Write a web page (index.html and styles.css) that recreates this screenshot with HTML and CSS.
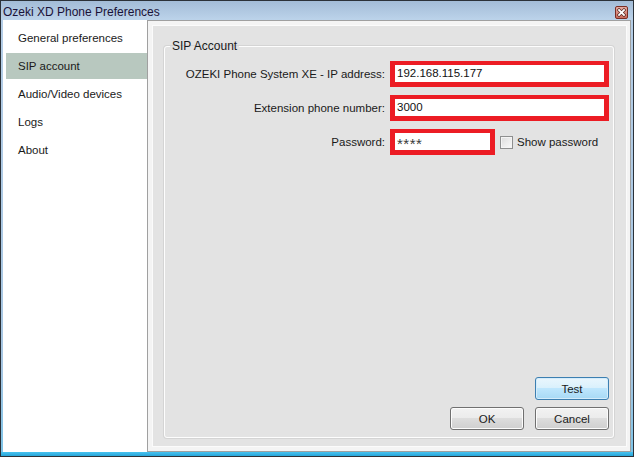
FILE: index.html
```html
<!DOCTYPE html>
<html>
<head>
<meta charset="utf-8">
<title>Ozeki XD Phone Preferences</title>
<link rel="stylesheet" href="styles.css">
</head>
<body>
<div class="window">
  <div class="titlebar">
    <span class="title">Ozeki XD Phone Preferences</span>
    <span class="close">
      <svg width="13" height="13" viewBox="0 0 13 13">
        <defs>
          <linearGradient id="cg" x1="0" y1="0" x2="0" y2="1">
            <stop offset="0" stop-color="#e9b0a6"/>
            <stop offset="1" stop-color="#c9685a"/>
          </linearGradient>
        </defs>
        <rect x="0.5" y="0.5" width="12" height="12" rx="1.5" fill="url(#cg)" stroke="#7a2e24"/>
        <path d="M4 4 L9 9 M9 4 L4 9" stroke="#5a2a24" stroke-width="3.2" stroke-linecap="square"/>
        <path d="M4 4 L9 9 M9 4 L4 9" stroke="#ffffff" stroke-width="1.8" stroke-linecap="square"/>
      </svg>
    </span>
  </div>
  <div class="frame">
    <ul class="nav">
      <li class="nav-item">General preferences</li>
      <li class="nav-item active">SIP account</li>
      <li class="nav-item">Audio/Video devices</li>
      <li class="nav-item">Logs</li>
      <li class="nav-item">About</li>
    </ul>
    <div class="panel">
      <div class="page">
        <fieldset class="group">
          <legend class="legend">SIP Account</legend>
          <div class="form">
            <label class="label">OZEKI Phone System XE - IP address:</label>
            <div class="field"><span class="box wide"><span class="input">192.168.115.177</span></span></div>
            <label class="label">Extension phone number:</label>
            <div class="field"><span class="box wide"><span class="input">3000</span></span></div>
            <label class="label">Password:</label>
            <div class="field">
              <span class="box narrow pass-box"><span class="input pass">****</span></span>
              <span class="check"></span>
              <span class="check-label">Show password</span>
            </div>
          </div>
          <div class="spacer"></div>
          <div class="buttons">
            <div class="btn-row"><button class="btn focus">Test</button></div>
            <div class="btn-row"><button class="btn">OK</button><button class="btn">Cancel</button></div>
          </div>
        </fieldset>
      </div>
    </div>
  </div>
</div>
</body>
</html>
```
FILE: styles.css
```css
* { box-sizing: border-box; }
html, body { margin: 0; padding: 0; background: #ffffff; }
body {
  font-family: "Liberation Sans", Arial, sans-serif;
  font-size: 11.5px;
  color: #1a1a1a;
}
.window {
  width: 634px;
  height: 457px;
  border: 1px solid #2b3138;
  display: flex;
  flex-direction: column;
  background: #bcd2e9;
}
.titlebar {
  height: 19px;
  display: flex;
  align-items: center;
  justify-content: space-between;
  padding: 0 5px 0 2px;
  background: linear-gradient(#a3bcd7, #bcd3ea);
}
.title {
  font-size: 12px;
  color: #1a1238;
  line-height: 14px;
  padding-top: 2px;
}
.close { display: flex; margin-top: 3px; }
.frame {
  flex: 1;
  display: flex;
  padding: 0 2px 4px 2px;
  background: linear-gradient(to bottom, #b4cde6 0%, #a6c6e2 80%, #7cc4e8 100%);
  position: relative;
}
.frame::after {
  content: "";
  position: absolute;
  left: 0; right: 0; bottom: 0;
  height: 4px;
  background: linear-gradient(#45c2f0, #2aa6d8);
}
.nav {
  list-style: none;
  margin: 0;
  padding: 5px 0 0 3px;
  width: 144px;
  background: #ffffff;
}
.nav-item {
  height: 26px;
  line-height: 26px;
  margin-bottom: 2px;
  padding-left: 12px;
  font-size: 11.5px;
  color: #1a1a1a;
}
.nav-item.active { background: #b8c8bf; }
.panel {
  flex: 1;
  display: flex;
  border: 1px solid #a0a0a0;
  background: #f4f4f4;
  padding: 4px 3px 4px 4px;
}
.page {
  flex: 1;
  display: flex;
  border: 1px solid #fbfbfb;
  background: #e3e3e3;
  padding: 13px 12px 8px 11px;
}
.group {
  flex: 1;
  margin: 0;
  padding: 0 4px 7px 0;
  border: 1px solid #fdfdfd;
  border-radius: 3px;
  box-shadow: 0 0 0 1px #d4d4d4;
  display: flex;
  flex-direction: column;
  min-width: 0;
}
.legend {
  margin-left: 5px;
  padding: 0 2px;
  font-size: 12px;
  line-height: 14px;
  color: #1a1a1a;
}
.form {
  display: grid;
  grid-template-columns: 1fr auto;
  row-gap: 8px;
  margin-top: 8px;
  align-items: center;
}
.label {
  text-align: right;
  padding-right: 5px;
  font-size: 11.5px;
}
.field {
  display: flex;
  align-items: center;
}
.box {
  display: flex;
  height: 26px;
  border: 5px solid #ec1c24;
  border-top-width: 4px;
  background: #ffffff;
}
.box.wide { width: 219px; }
.box.narrow { width: 105px; }
.pass-box { align-items: flex-end; }
.input {
  flex: 1;
  background: #ffffff;
  padding-left: 2px;
  line-height: 16px;
  font-size: 11.5px;
  color: #111;
}
.input.pass {
  font-size: 15px;
  line-height: 12px;
  padding-top: 3px;
  letter-spacing: 0.5px;
  color: #3a3a3a;
}
.check {
  width: 13px;
  height: 13px;
  margin-left: 5px;
  border: 1px solid #8e8f8f;
  background: linear-gradient(135deg, #dcdcdc, #fafafa);
  box-shadow: inset 0 0 0 1px #f4f4f4;
}
.check-label { margin-left: 4px; font-size: 11.5px; }
.spacer { flex: 1; }
.buttons {
  display: flex;
  flex-direction: column;
  align-items: flex-end;
  gap: 7px;
}
.btn-row { display: flex; gap: 11px; }
.btn {
  width: 74px;
  height: 23px;
  margin: 0;
  padding: 0;
  font-family: "Liberation Sans", Arial, sans-serif;
  font-size: 11.5px;
  color: #1a1a1a;
  border: 1px solid #707070;
  border-radius: 3px;
  background: linear-gradient(#f2f2f2 0%, #ebebeb 49%, #dddddd 50%, #cfcfcf 100%);
  box-shadow: inset 0 0 0 1px #fcfcfc;
}
.btn.focus {
  border-color: #3c7fb1;
  background: linear-gradient(#eaf6fd 0%, #d9f0fc 49%, #bee6fd 50%, #a7d9f5 100%);
  box-shadow: inset 0 0 0 1px #d4ecfb;
}
```
